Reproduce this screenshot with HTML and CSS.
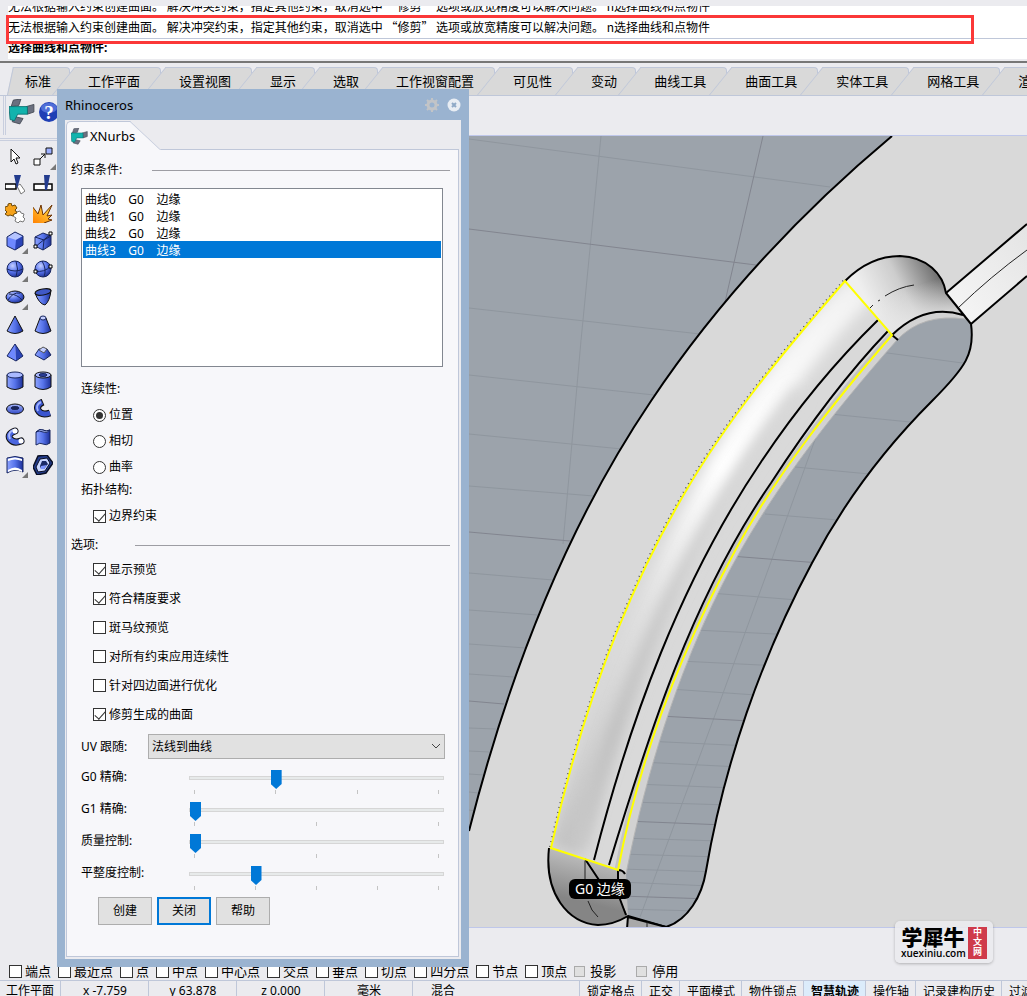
FILE: index.html
```html
<!DOCTYPE html>
<html lang="zh-CN">
<head>
    <meta charset="UTF-8">
    <meta name="viewport" content="width=device-width, initial-scale=1.0">
    <title>Rhinoceros - XNurbs</title>
    <link rel="stylesheet" href="styles.css">
</head>
<body>
    <svg class="defs" width="0" height="0" aria-hidden="true">
        <defs>
            <linearGradient id="blue" x1="0" y1="0" x2="1" y2="0">
                <stop offset="0" stop-color="#8ea4ff"/><stop offset=".5" stop-color="#5673ea"/><stop offset="1" stop-color="#1c2f98"/>
            </linearGradient>
            <linearGradient id="blueDown" x1="0" y1="0" x2="0" y2="1">
                <stop offset="0" stop-color="#a9b9ff"/><stop offset="1" stop-color="#2e47c4"/>
            </linearGradient>
            <radialGradient id="ball" cx=".35" cy=".3" r=".75">
                <stop offset="0" stop-color="#c3ceff"/><stop offset=".5" stop-color="#5a76ef"/><stop offset="1" stop-color="#1b2d90"/>
            </radialGradient>
            <linearGradient id="fire" x1="0" y1="1" x2="1" y2="0">
                <stop offset="0" stop-color="#ff7f00"/><stop offset="1" stop-color="#ffe04a"/>
            </linearGradient>
            <symbol id="xnurbs" viewBox="0 0 24 24">
                <path d="M4 1l7-1-2 6-7 1zM16 7l7-2v7l-6 2zM4 16l9 2-3 5-7-2z" fill="#6b7080" stroke="#444a55" stroke-width=".8"/>
                <path d="M0 7l17 0v7l-9 0-3 6-4-1z" fill="#12b3ad" stroke="#0b6f70" stroke-width=".8"/>
            </symbol>
        </defs>
    </svg>

    <div class="command">
        <div class="history">
            <p>无法根据输入约束创建曲面。 解决冲突约束，指定其他约束，取消选中 “修剪” 选项或放宽精度可以解决问题。 n选择曲线和点物件</p>
            <p>无法根据输入约束创建曲面。 解决冲突约束，指定其他约束，取消选中 “修剪” 选项或放宽精度可以解决问题。 n选择曲线和点物件</p>
        </div>
        <div class="prompt">选择曲线和点物件:</div>
        <div class="highlight"></div>
    </div>

    <nav class="tabs">
        <button class="tab short first">标准</button>
        <button class="tab">工作平面</button>
        <button class="tab">设置视图</button>
        <button class="tab short">显示</button>
        <button class="tab short">选取</button>
        <button class="tab">工作视窗配置</button>
        <button class="tab">可见性</button>
        <button class="tab short">变动</button>
        <button class="tab">曲线工具</button>
        <button class="tab">曲面工具</button>
        <button class="tab">实体工具</button>
        <button class="tab">网格工具</button>
        <button class="tab">渲染工具</button>
    </nav>

    <div class="toolbar">
        <button class="tool big" aria-label="XNurbs"><svg width="26" height="26"><use href="#xnurbs"/></svg></button>
        <button class="tool big" aria-label="Help">
            <svg width="22" height="22" viewBox="0 0 22 22"><circle cx="11" cy="11" r="10" fill="#1f3fb5"/><ellipse cx="11" cy="7" rx="8" ry="5" fill="#6f8df0" opacity=".6"/><text x="11" y="18" text-anchor="middle" class="help-mark">?</text></svg>
        </button>
    </div>

    <main class="workspace">
        <div class="tools">
            <button class="tool" aria-label="Select"><svg viewBox="0 0 20 20"><path d="M6 2v13l3-3 2 5 2-1-2-5h4z" fill="#fff" stroke="#111"/></svg></button>
            <button class="tool more" aria-label="Points"><svg viewBox="0 0 20 20"><path d="M7 12l5-5M8 7h4v4" fill="none" stroke="#111"/><path d="M1 12h6v6h-6z" fill="#fff" stroke="#111"/><path d="M13 1h6v6h-6z" fill="#9db0ff" stroke="#111"/></svg></button>
            <button class="tool" aria-label="Trim"><svg viewBox="0 0 20 20"><path d="M0 9h11v5h-11z" fill="#fff" stroke="#000" stroke-width="1.5"/><path d="M12 11l3-2 5 7-4 3z" fill="#fff" stroke="#777"/><path d="M9 0h7l-4 14z" fill="#233c8e"/></svg></button>
            <button class="tool" aria-label="Split"><svg viewBox="0 0 20 20"><path d="M1 9h18v6h-18z" fill="#fff" stroke="#000" stroke-width="1.5"/><path d="M11 0h6l-3 15h-2z" fill="#233c8e"/></svg></button>
            <button class="tool" aria-label="Join"><svg viewBox="0 0 20 20"><path d="M8 9l2-2 2 2 3-1 1 2 3 1-1 3 2 2-2 3-3-1-2 2-3-2 1-3-3-2z" fill="#fff" stroke="#777"/><path d="M0 4l3-1 0-2 3-1 1 3 3-1 2 3-2 2 2 3-3 1-1 2-3-1-2 1-3-2 2-2-2-2z" fill="#f5a21b" stroke="#6c4a0c"/></svg></button>
            <button class="tool" aria-label="Explode"><svg viewBox="0 0 20 20"><path d="M-1 20V3l6 8 3-9 2 10L19 2l-5 11 5-1-4 4 4 1-8 3z" fill="url(#fire)"/><path d="M-1 3l6 8 3-9 2 10L19 2l-5 11 5-1-4 4 4 1-8 3" fill="none" stroke="#6c3305"/></svg></button>
            <button class="tool more" aria-label="Box"><svg viewBox="0 0 20 20"><path d="M2 6l8-5 8 4v9l-8 5-8-4z" fill="#6e88ff"/><path d="M2 6l8-5 8 4-7 4z" fill="#b5c4ff"/><path d="M11 9l7-4v9l-8 5z" fill="#2b44b8"/><path d="M2 6l8-5 8 4v9l-8 5-8-4z" fill="none" stroke="#18265f"/></svg></button>
            <button class="tool" aria-label="Box corners"><svg viewBox="0 0 20 20"><path d="M2 6l8-4 8 3v9l-8 5-8-4z" fill="url(#blue)" stroke="#18265f"/><path d="M2 6l9 3 7-4M11 9l-1 10M2 16L18 3" fill="none" stroke="#18265f"/><path d="M1 14h3v3h-3zM16 1h3v3h-3z" fill="#fff" stroke="#000"/></svg></button>
            <button class="tool more" aria-label="Sphere"><svg viewBox="0 0 20 20"><circle cx="10" cy="10" r="8" fill="url(#ball)" stroke="#18265f"/><path d="M2 10q8 4 16 0M11 2q3 8 0 16" fill="none" stroke="#18265f"/></svg></button>
            <button class="tool" aria-label="Sphere diameter"><svg viewBox="0 0 20 20"><circle cx="10" cy="10" r="8" fill="url(#ball)" stroke="#18265f"/><path d="M2 12q9 2 16-5M9 2q5 8 2 16" fill="none" stroke="#18265f"/><path d="M1 11h3v3h-3zM16 6h3v3h-3z" fill="#fff" stroke="#000"/></svg></button>
            <button class="tool more" aria-label="Ellipsoid"><svg viewBox="0 0 20 20"><ellipse cx="10" cy="10" rx="9" ry="6" fill="url(#ball)" stroke="#111"/><path d="M3 13Q8 5 15 6M4 7Q12 7 17 13" fill="none" stroke="#18265f"/></svg></button>
            <button class="tool" aria-label="Paraboloid"><svg viewBox="0 0 20 20"><path d="M2 6Q6 17 12 18Q17 14 18 3z" fill="url(#blue)" stroke="#111"/><ellipse cx="10" cy="5" rx="8" ry="3" transform="rotate(-10 10 5)" fill="#4059c7" stroke="#111"/></svg></button>
            <button class="tool" aria-label="Cone"><svg viewBox="0 0 20 20"><path d="M10 1L2 16q8 5 16 0z" fill="url(#blue)" stroke="#111"/></svg></button>
            <button class="tool" aria-label="Truncated cone"><svg viewBox="0 0 20 20"><path d="M7 3L2 16q8 5 16 0L13 3z" fill="url(#blue)" stroke="#111"/><ellipse cx="10" cy="3" rx="3" ry="2" fill="#c3ceff" stroke="#18265f"/></svg></button>
            <button class="tool" aria-label="Pyramid"><svg viewBox="0 0 20 20"><path d="M10 1L2 13l9 5z" fill="#6e88ff"/><path d="M10 1l8 12-7 5z" fill="#2b44b8"/><path d="M10 1L2 13l9 5 7-5z" fill="none" stroke="#18265f"/></svg></button>
            <button class="tool" aria-label="Truncated pyramid"><svg viewBox="0 0 20 20"><path d="M6 6l-4 6 9 5 7-5-4-6z" fill="url(#blue)" stroke="#18265f"/><path d="M6 7l4-3 4 2-3 4z" fill="#c3ceff" stroke="#555"/></svg></button>
            <button class="tool" aria-label="Cylinder"><svg viewBox="0 0 20 20"><path d="M2 4v12q8 5 16 0V4z" fill="url(#blue)" stroke="#111"/><ellipse cx="10" cy="4" rx="8" ry="3" fill="#a9b9ff" stroke="#18265f"/></svg></button>
            <button class="tool" aria-label="Tube"><svg viewBox="0 0 20 20"><path d="M2 4v12q8 5 16 0V4z" fill="url(#blue)" stroke="#111"/><ellipse cx="10" cy="4" rx="8" ry="3" fill="#a9b9ff" stroke="#111"/><ellipse cx="10" cy="4" rx="4" ry="1.5" fill="#2b3f9a" stroke="#18265f"/></svg></button>
            <button class="tool" aria-label="Torus"><svg viewBox="0 0 20 20"><ellipse cx="10" cy="10" rx="8.5" ry="5" fill="url(#blueDown)" stroke="#111"/><ellipse cx="10" cy="9" rx="4" ry="1.5" fill="#1a2456" stroke="#18265f"/></svg></button>
            <button class="tool" aria-label="Pipe"><svg viewBox="0 0 20 20" fill="none"><path d="M10 3Q3 6 5 11Q8 17 17 14" stroke="#111" stroke-width="7"/><path d="M9 3Q3 6 5 11Q8 17 17 14" stroke="#3a55cf" stroke-width="5"/><path d="M8 3Q2 6 5 12" stroke="#9db0ff" stroke-width="2"/></svg></button>
            <button class="tool" aria-label="Round pipe"><svg viewBox="0 0 20 20" fill="none"><path d="M10 4Q2 7 5 12Q9 17 16 14" stroke="#111" stroke-width="7" stroke-linecap="round"/><path d="M10 4Q2 7 5 12Q9 17 16 14" stroke="#4a66df" stroke-width="5" stroke-linecap="round"/><path d="M8 3Q2 6 5 12" stroke="#a9b9ff" stroke-width="2"/><circle cx="10" cy="4" r="2.5" fill="#fff"/><circle cx="16" cy="14" r="2.5" fill="#fff"/></svg></button>
            <button class="tool" aria-label="Extrude curve"><svg viewBox="0 0 20 20"><path d="M3 5q4-4 7-2t7 0v13q-4 3-7 1t-7 1z" fill="url(#blue)" stroke="#18265f"/><path d="M3 5q4-4 7-2t7 0q-3 4-7 2t-7 0z" fill="#b5c4ff" stroke="#18265f"/></svg></button>
            <button class="tool more" aria-label="Extrude surface"><svg viewBox="0 0 20 20"><path d="M2 3q8-3 16 0v14q-8-4-16 1z" fill="url(#blue)" stroke="#18265f"/><path d="M3 4q7-3 14 0v2q-7-3-14 0zM3 15q7-5 14 0v2q-7-4-14 0z" fill="#fff"/></svg></button>
            <button class="tool" aria-label="Solid tools"><svg viewBox="0 0 20 20"><path d="M0 12L5 1l9-1 6 8-7 10-9 2z" fill="#223b8c" stroke="#0a0f24" stroke-width="1.5"/><path d="M3 12l4-8 7-1 3 5-5 8-7 1z" fill="#c9d6ff" stroke="#0a0f24"/><path d="M7 11l2-5 4 0 2 3-4 5-3 0z" fill="#1a2a66"/><path d="M8 11l6-1-3 4-3 0z" fill="#7d95ff"/></svg></button>
        </div>

        <div class="viewport">
            <svg class="scene" viewBox="469 135 558 792" preserveAspectRatio="xMinYMin slice">
                <defs>
                    <linearGradient id="edgeTone" gradientUnits="userSpaceOnUse" x1="840" y1="280" x2="580" y2="850">
                        <stop offset="0" stop-color="#f2f2f2"/><stop offset=".35" stop-color="#fff"/><stop offset=".6" stop-color="#e2e2e2"/><stop offset="1" stop-color="#c3c3c3"/>
                    </linearGradient>
                    <linearGradient id="shadeTone" gradientUnits="userSpaceOnUse" x1="840" y1="300" x2="580" y2="850">
                        <stop offset="0" stop-color="#dedede"/><stop offset=".5" stop-color="#c8c8c8"/><stop offset=".8" stop-color="#bcbcbc"/><stop offset="1" stop-color="#c9c9c9"/>
                    </linearGradient>
                    <linearGradient id="capTone" gradientUnits="userSpaceOnUse" x1="870" y1="305" x2="943" y2="268">
                        <stop offset="0" stop-color="#efefef"/><stop offset=".45" stop-color="#cdcdcd"/><stop offset="1" stop-color="#5e5e5e"/>
                    </linearGradient>
                    <linearGradient id="capLight" gradientUnits="userSpaceOnUse" x1="930" y1="280" x2="940" y2="312">
                        <stop offset="0" stop-color="#e6e6e6" stop-opacity="0"/><stop offset="1" stop-color="#e6e6e6" stop-opacity=".8"/>
                    </linearGradient>
                    <linearGradient id="bottomTone" gradientUnits="userSpaceOnUse" x1="590" y1="850" x2="578" y2="900">
                        <stop offset="0" stop-color="#c4c4c4"/><stop offset="1" stop-color="#858585"/>
                    </linearGradient>
                    <linearGradient id="grooveTone" x1="0" y1="1" x2="1" y2="0">
                        <stop offset="0" stop-color="#f7f7f7"/><stop offset="1" stop-color="#e4e4e4"/>
                    </linearGradient>
                    <filter id="soft" x="-20%" y="-20%" width="140%" height="140%"><feGaussianBlur stdDeviation="7"/></filter>
                    <path id="hole" d="M896 339Q922 312 963 315L971 323C975 352 966 366 932 400C885 447 843 503 812 562C761 657 724 764 706 870C702 895 688 919 666 926L628 915L620 890L626 870C646 772 677 673 722 584C767 495 830 415 896 339z"/>
                    <path id="band" d="M551 847C578 725 620 603 683 495C728 417 786 348 845 280L892 334C834 401 778 471 736 548C682 648 639 757 618 869z"/>
                    <clipPath id="holeClip"><use href="#hole"/></clipPath>
                    <clipPath id="bandClip"><use href="#band"/></clipPath>
                </defs>
                <rect x="469" y="135" width="558" height="792" fill="#9ca3ab"/>
                <path class="grid" d="M469 138L830 186M469 307L700 333M469 374L654 394M469 433L622 448M469 485L594 495M469 572L553 579M469 609L538 614M469 643L526 647M469 673L514 676M469 727L496 728M469 750L490 751M469 773L484 774M469 791L479 792M469 809L475 810M601 135Q580 340 563 543"/>
                <path class="grid major" d="M469 228L756 264M763 135L725 301M469 531L570 540M469 700L504 703"/>
                <path d="M892 135C800 212 718 300 651 400C564 529 507 680 469 830V927H1027V135z" fill="#d9d9d9"/>
                <path d="M892 135C800 212 718 300 651 400C564 529 507 680 469 830" class="edge"/>
                <path d="M946 292L1027 223V275L971 323z" fill="url(#grooveTone)"/>
                <path d="M946 292L1027 223M971 323L1027 275" class="edge"/>
                <path d="M958 307Q990 276 1027 249" class="hair"/>
                <g clip-path="url(#holeClip)">
                    <rect x="600" y="300" width="400" height="640" fill="#9ca3ab"/>
                    <path class="grid" d="M880 351L970 363M830 413L920 422M795 466L880 474M765 513L850 520M710 592L810 600M695 629L795 634M680 660L780 665M670 688L770 695M645 740L750 745M640 761L740 766M635 783L735 787M630 801L730 804M620 837L720 840M620 853L720 856M620 868L720 871M620 881L710 885M620 908L700 910M816 436L772 558L718 706L640 916"/>
                    <path class="grid major" d="M730 555L820 562M660 715L750 720M625 820L725 824M620 895L710 898"/>
                </g>
                <path d="M892 334C834 401 778 471 736 548C682 648 639 757 618 869L626 873C646 772 677 673 722 584C767 495 830 415 897 339Q922 312 966 318L963 314Q925 302 892 334z" fill="#d2d2d2"/>
                <path d="M626 873C646 772 677 673 722 584C767 495 830 415 897 339Q922 312 966 318" fill="none" stroke="#b4b4b4"/>
                <g clip-path="url(#bandClip)">
                    <rect x="540" y="270" width="360" height="610" fill="#d9d9d9"/>
                    <path d="M862 286C735 409 647 590 565 850" fill="none" stroke="url(#edgeTone)" stroke-width="32" filter="url(#soft)"/>
                    <path d="M800 390C710 500 630 650 580 845" fill="none" stroke="url(#shadeTone)" stroke-width="12" filter="url(#soft)"/>
                    <path d="M892 334C834 401 778 471 736 548C682 648 639 757 618 869" fill="none" stroke="#c4c4c4" stroke-width="7"/>
                </g>
                <path d="M845 280Q870 255 900 255C927 256 943 273 946 292L966 315Q928 302 892 334z" fill="url(#capTone)"/>
                <path d="M845 280Q870 255 900 255C927 256 943 273 946 292L966 315Q928 302 892 334z" fill="url(#capLight)"/>
                <path d="M845 280Q870 255 900 255C927 256 943 273 946 292L971 323M892 334Q925 302 963 314" class="edge"/>
                <path d="M971 323C975 352 966 366 932 400C885 447 843 503 812 562C761 657 724 764 706 870C702 895 688 919 666 926L628 915" class="edge"/>
                <path d="M551 847L618 869L618 893L628 915Q613 924 598 924C568 922 544 893 549 847z" fill="url(#bottomTone)"/>
                <path d="M618 869L618 893L628 915L626 873z" fill="#bdbdbd"/>
                <path d="M628 916L627 928H660L666 926z" fill="#a9a9a9"/>
                <path d="M549 847C544 893 568 922 598 924Q613 924 628 915L627 928M618 869V893L626 914M618 869Q623 869 625 873M585 858L605 888M628 916L666 926M892 334L898 339" class="edge"/>
                <path d="M647 921V928M585 860V878M588 900Q591 910 598 916M885 295Q899 286 914 284M870 307L873 304M878 300L880 299" class="hair"/>
                <path d="M878 319C834 362 795 410 761 461C680 581 630 719 594 859" class="edge"/>
                <path d="M888 330C845 375 806 428 771 482C692 597 649 732 609 864" class="edge"/>
                <path d="M550 846C577 724 619 602 682 494C727 416 785 347 844 279" fill="none" stroke="#555" stroke-width="2" stroke-dasharray="1 4"/>
                <use href="#band" fill="none" stroke="#ffff00" stroke-width="2"/>
            </svg>
            <span class="edge-label">G0 边缘</span>
        </div>
    </main>

    <div class="logo">
        <div class="logo-name"><b>学犀牛</b><span>xuexiniu.com</span></div>
        <div class="logo-tag"><span>中</span><span>文</span><span>网</span></div>
    </div>

    <div class="osnap">
        <label><input type="checkbox">端点</label>
        <label><input type="checkbox">最近点</label>
        <label><input type="checkbox">点</label>
        <label><input type="checkbox">中点</label>
        <label><input type="checkbox">中心点</label>
        <label><input type="checkbox">交点</label>
        <label><input type="checkbox">垂点</label>
        <label><input type="checkbox">切点</label>
        <label><input type="checkbox">四分点</label>
        <label><input type="checkbox">节点</label>
        <label><input type="checkbox">顶点</label>
        <label class="wide"><input type="checkbox" disabled>投影</label>
        <label><input type="checkbox" disabled>停用</label>
    </div>

    <footer class="status">
        <span class="plane">工作平面</span>
        <span class="coord">x -7.759</span>
        <span class="coord">y 63.878</span>
        <span class="coord">z 0.000</span>
        <span class="coord">毫米</span>
        <span class="layer">混合</span>
        <button>锁定格点</button>
        <button>正交</button>
        <button>平面模式</button>
        <button>物件锁点</button>
        <button class="on">智慧轨迹</button>
        <button>操作轴</button>
        <button>记录建构历史</button>
        <button>过滤器</button>
    </footer>

    <section class="dialog">
        <header class="titlebar">
            <h1>Rhinoceros</h1>
            <button aria-label="Settings"><svg width="14" height="14" viewBox="0 0 14 14"><circle cx="7" cy="7" r="4" fill="none" stroke="#c2c4c7" stroke-width="3"/><path d="M7 0v3M7 11v3M0 7h3M11 7h3M2 2l2 2M10 10l2 2M12 2l-2 2M4 10l-2 2" stroke="#c2c4c7" stroke-width="2"/></svg></button>
            <button aria-label="Close"><svg width="14" height="14" viewBox="0 0 14 14"><circle cx="7" cy="7" r="6.5" fill="#e8edf3"/><path d="M5 5l4 4M9 5l-4 4" stroke="#8fa9c6" stroke-width="2"/></svg></button>
        </header>
        <div class="dialog-body">
            <div class="panel-tab"><svg width="17" height="17"><use href="#xnurbs"/></svg>XNurbs</div>
            <form class="panel">
                <h2 class="group">约束条件:</h2>
                <select class="list" size="10" aria-label="约束条件">
                    <option>曲线0&nbsp;&nbsp;&nbsp;&nbsp;G0&nbsp;&nbsp;&nbsp;&nbsp;边缘</option>
                    <option>曲线1&nbsp;&nbsp;&nbsp;&nbsp;G0&nbsp;&nbsp;&nbsp;&nbsp;边缘</option>
                    <option>曲线2&nbsp;&nbsp;&nbsp;&nbsp;G0&nbsp;&nbsp;&nbsp;&nbsp;边缘</option>
                    <option selected>曲线3&nbsp;&nbsp;&nbsp;&nbsp;G0&nbsp;&nbsp;&nbsp;&nbsp;边缘</option>
                </select>

                <h3 class="continuity">连续性:</h3>
                <div class="choices">
                    <label><input type="radio" name="continuity" checked>位置</label>
                    <label><input type="radio" name="continuity">相切</label>
                    <label><input type="radio" name="continuity">曲率</label>
                </div>
                <h3>拓扑结构:</h3>
                <div class="choices">
                    <label><input type="checkbox" checked>边界约束</label>
                </div>

                <h2 class="group options-title">选项:</h2>
                <div class="choices options">
                    <label><input type="checkbox" checked>显示预览</label>
                    <label><input type="checkbox" checked>符合精度要求</label>
                    <label><input type="checkbox">斑马纹预览</label>
                    <label><input type="checkbox">对所有约束应用连续性</label>
                    <label><input type="checkbox">针对四边面进行优化</label>
                    <label><input type="checkbox" checked>修剪生成的曲面</label>
                </div>

                <div class="combo-row">
                    <label for="uv">UV 跟随:</label>
                    <div class="combo">
                        <select id="uv"><option>法线到曲线</option></select>
                        <svg width="10" height="6" viewBox="0 0 10 6"><path d="M1 1l4 4 4-4" fill="none" stroke="#444"/></svg>
                    </div>
                </div>
                <div class="slider-row">
                    <label for="g0">G0 精确:</label>
                    <div class="slider"><input type="range" id="g0" min="0" max="3" value="1"><div class="ticks"><i></i><i></i><i></i><i></i></div></div>
                </div>
                <div class="slider-row">
                    <label for="g1">G1 精确:</label>
                    <div class="slider"><input type="range" id="g1" min="0" max="2" value="0"><div class="ticks"><i></i><i></i><i></i></div></div>
                </div>
                <div class="slider-row">
                    <label for="quality">质量控制:</label>
                    <div class="slider"><input type="range" id="quality" min="0" max="2" value="0"><div class="ticks"><i></i><i></i><i></i></div></div>
                </div>
                <div class="slider-row">
                    <label for="flat">平整度控制:</label>
                    <div class="slider"><input type="range" id="flat" min="0" max="4" value="1"><div class="ticks"><i></i><i></i><i></i><i></i><i></i></div></div>
                </div>

                <div class="actions">
                    <button type="button">创建</button>
                    <button type="button" class="default">关闭</button>
                    <button type="button">帮助</button>
                </div>
            </form>
        </div>
    </section>
</body>
</html>
```
FILE: styles.css
```css
* { box-sizing: border-box; }
body { margin: 0; height: 100vh; display: flex; flex-direction: column; position: relative; overflow: hidden; background: #ebebef; color: #000; font: 12px/20px "Noto Sans", "Noto Sans CJK SC", sans-serif; }
button, select, input { font: inherit; color: inherit; margin: 0; }
button { padding: 0; border: none; background: none; }
h1, h2, h3, p { margin: 0; font-size: 12px; font-weight: normal; }
.defs { position: absolute; }

/* command line */
.command { position: relative; flex: none; height: 63px; padding: 6px 0 0 8px; border-bottom: 2px solid #777; white-space: nowrap; }
.history { display: flex; flex-direction: column; justify-content: flex-end; height: 33px; overflow: hidden; background: #fff; border-bottom: 1px solid #bfc7d9; font-family: "Noto Sans CJK SC", sans-serif; }
.history p { flex: none; height: 21px; }
.prompt { height: 20px; line-height: 18px; background: #fff; font-weight: bold; overflow: hidden; }
.highlight { position: absolute; left: 6px; right: 53px; top: 15px; height: 29px; border: 3px solid #fb3838; }

/* tool tabs */
.tabs { flex: none; display: flex; height: 33px; padding: 4px 0 0 7px; overflow: hidden; border-bottom: 1px solid #bfc7d9; }
.tab { position: relative; z-index: 0; flex: none; padding: 0 21px 0 18px; font-size: 13px; line-height: 27px; }
.tab.short { padding-right: 19px; }
.tab::before, .tab::after { content: ""; position: absolute; z-index: -1; top: 0; bottom: 0; background: #d9d9d9; border: 1px solid #bfc7d9; border-bottom: none; }
.tab::before { left: -18px; width: 52px; border-right: none; transform: skewX(-39deg); transform-origin: bottom left; }
.tab::after { left: 24px; right: 0; border-left: none; border-top-right-radius: 4px; }
.tab.first::before { left: 0; width: 30px; transform: skewX(-12deg); }

.toolbar { flex: none; display: flex; height: 39px; padding: 3px 2px; margin-left: 3px; border-left: 3px double #c8cede; }
.tool { display: flex; align-items: center; justify-content: center; position: relative; }
.tool.big { width: 27px; height: 26px; }
.help-mark { font: bold 19px "Liberation Serif", serif; fill: #fff; }

/* workspace */
.workspace { flex: 1; min-height: 0; display: flex; }
.tools { flex: none; display: grid; grid-template-columns: 28px 28px; grid-auto-rows: 28px; align-content: start; width: 60px; margin-top: 3px; padding: 2px 0 0 1px; border-top: 3px double #c8cede; }
.tools svg { width: 20px; height: 20px; }
.tool.more::after { content: ""; position: absolute; right: 1px; bottom: 1px; border: 3px solid #777; border-top-color: transparent; border-left-color: transparent; }
.viewport { position: relative; flex: 1; min-width: 0; padding-left: 409px; background: #9ca3ab; border: 1px solid #bfc7ea; border-width: 1px 0; overflow: hidden; }
.scene { display: block; width: 100%; height: 100%; }
.scene .edge { fill: none; stroke: #000; stroke-width: 2; stroke-linejoin: round; }
.scene .hair { fill: none; stroke: #222; stroke-width: 1; }
.scene .grid { fill: none; stroke: #8f969e; stroke-width: 1; }
.scene .grid.major { stroke: #82858f; }
.edge-label { position: absolute; left: 509px; top: 743px; padding: 0 6px; border-radius: 6px; background: #000; color: #fff; font-size: 14px; line-height: 20px; }

.logo { position: absolute; right: 34px; bottom: 33px; display: flex; gap: 3px; padding: 6px 6px 4px; border-radius: 5px; background: rgba(235, 235, 239, 0.85); box-shadow: 0 1px 3px rgba(0, 0, 0, 0.25); }
.logo-name { width: 64px; text-align: center; }
.logo-name b { display: block; font-size: 21px; font-weight: 900; line-height: 20px; }
.logo-name span { display: block; font: 600 10px/12px "Open Sans", sans-serif; }
.logo-tag { width: 19px; background: #cf3b4b; color: #fff; text-align: center; font-weight: bold; font-size: 9px; line-height: 10px; }
.logo-tag span { display: block; }

/* bottom bars */
.osnap { flex: none; display: flex; gap: 7px; height: 52px; padding: 35px 0 0 5px; margin-left: 4px; font-size: 13px; line-height: 17px; }
.osnap label { display: flex; align-items: center; gap: 3px; white-space: nowrap; }
.osnap .wide { margin-right: 13px; }
.status { flex: none; display: flex; height: 16px; overflow: hidden; border-top: 1px solid #bfc7d9; white-space: nowrap; }
.status > * { flex: none; height: 20px; line-height: 19px; padding: 0 6px 0 7px; border-right: 1px solid #bfc7d9; text-align: center; }
.status .plane { width: 61px; padding: 0 6px; }
.status .coord { width: 88px; }
.status .layer { flex: 1 0 0; padding-left: 18px; text-align: left; }
.status .on { background: #dcecfb; font-weight: bold; }
.status button:last-child { width: 25px; border-right: none; text-align: left; overflow: hidden; }

/* check boxes and radios */
input[type="checkbox"], input[type="radio"] { appearance: none; flex: none; width: 13px; height: 13px; border: 1px solid #333; background: #fff; position: relative; }
input[type="radio"] { border-radius: 50%; }
input[type="checkbox"]:checked::before { content: ""; position: absolute; left: 3px; top: 0; width: 5px; height: 9px; border: solid #333; border-width: 0 1px 1px 0; transform: rotate(42deg); }
input[type="radio"]:checked::before { content: ""; position: absolute; inset: 2px; border-radius: 50%; background: #333; }
input[type="checkbox"]:disabled { width: 11px; height: 11px; border-color: #aaa; background: #e0e0e0; margin-right: 2px; }

/* dialog */
.dialog { position: absolute; left: 57px; top: 89px; width: 412px; padding: 0 8px 8px; background: #9ab3d0; }
.titlebar { display: flex; align-items: center; gap: 8px; height: 31px; }
.titlebar h1 { flex: 1; font-size: 13px; }
.titlebar button { width: 14px; height: 14px; line-height: 0; }
.dialog-body { padding: 1px 2px 2px 1px; background: #ebebef; }
.panel-tab { position: relative; z-index: 1; display: flex; align-items: center; gap: 2px; width: 64px; height: 29px; padding-left: 4px; border: 1px solid #bfc7d9; border-width: 1px 0 0 1px; border-top-left-radius: 5px; background: #f7f7fa; font-size: 13px; margin-bottom: -1px; }
.panel-tab svg { flex: none; }
.panel-tab::after { content: ""; position: absolute; z-index: -1; left: 30px; right: 0; top: -1px; bottom: 0; background: #f7f7fa; border: 1px solid #bfc7d9; border-width: 1px 1px 0 0; transform: skewX(47deg); transform-origin: top right; }
.panel { height: 808px; padding: 10px 8px 0 4px; background: #f7f7fa; border: 1px solid #bfc7d9; }
.group { display: flex; align-items: center; }
.group::after { content: ""; flex: 1; height: 1px; margin-left: 30px; background: #9d9da3; }
.options-title { margin-top: 6px; }
.options-title::after { margin-left: 37px; }
.list { display: block; width: 362px; height: 179px; margin: 8px 0 0 10px; padding: 1px; border: 1px solid #828790; border-radius: 0; background: #fff; overflow: hidden; outline: none; }
.list option { height: 17px; min-height: 17px; padding: 0 2px; line-height: 16px; }
.list option:checked { background: #0078d7 linear-gradient(#0078d7, #0078d7); color: #fff; }
.panel h3 { padding-left: 10px; }
.panel .continuity { margin-top: 12px; }
.choices { padding: 3px 0 0 22px; }
.choices label { display: flex; align-items: center; gap: 3px; height: 26px; }
.choices.options { padding-top: 0; }
.options label { height: 29px; }
.combo-row { display: flex; align-items: center; margin: 5px 5px 2px 10px; }
.combo-row label { width: 67px; }
.combo { position: relative; flex: 1; display: flex; }
.combo select { flex: 1; height: 25px; padding: 0 3px; appearance: none; border: 1px solid #adadad; border-radius: 0; background: #e1e1e1; }
.combo svg { position: absolute; right: 4px; top: 9px; }
.slider-row { display: flex; height: 32px; margin: 0 6px 0 10px; }
.slider-row label { width: 108px; line-height: 32px; }
.slider { flex: 1; padding-top: 9px; }
.slider input { display: block; width: 100%; height: 16px; appearance: none; background: none; }
.slider input::-webkit-slider-runnable-track { height: 4px; background: #e7eaea; border: 1px solid #d6d6d6; }
.slider input::-webkit-slider-thumb { appearance: none; width: 11px; height: 19px; margin-top: -7px; background: #0078d7; clip-path: polygon(0 0, 100% 0, 100% 74%, 50% 100%, 0 74%); }
.ticks { display: flex; justify-content: space-between; padding: 4px 5px 0; }
.ticks i { width: 1px; height: 4px; background: #c4c4c4; }
.actions { display: flex; gap: 5px; margin: 8px 0 0 27px; }
.actions button { width: 54px; height: 28px; border: 1px solid #adadad; background: #e1e1e1; }
.actions .default { border: 2px solid #0078d7; }
```
